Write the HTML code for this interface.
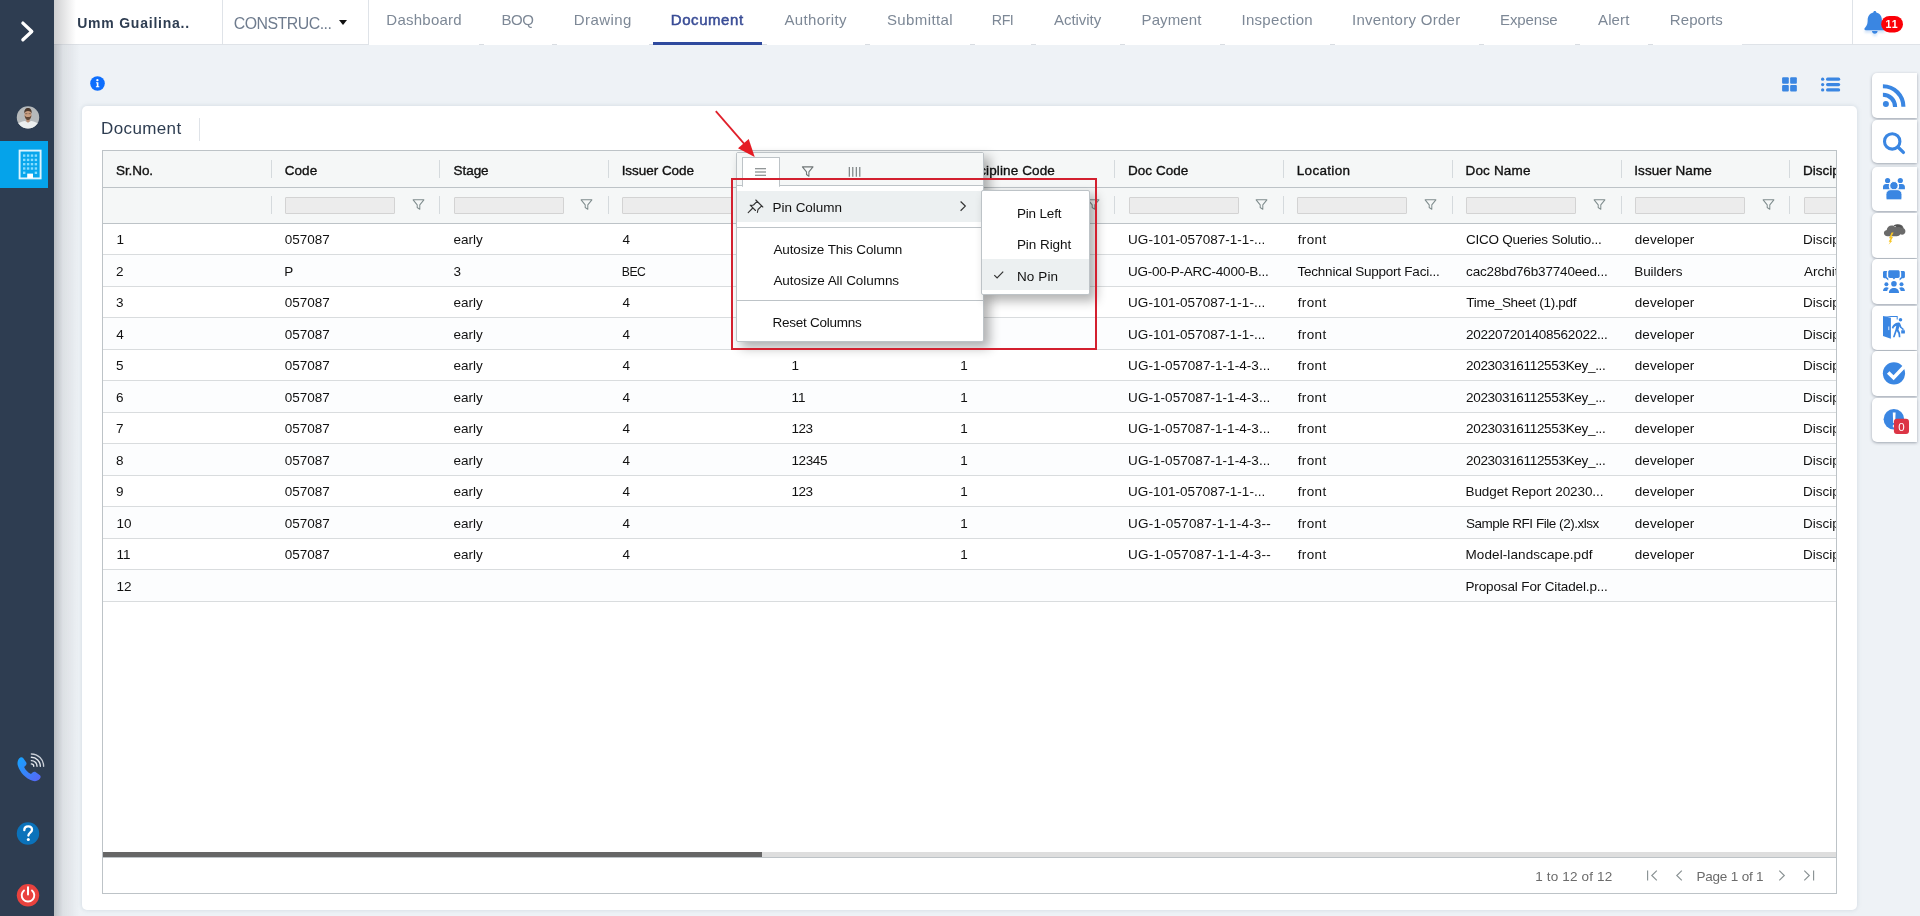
<!DOCTYPE html><html lang="en"><head><meta charset="utf-8"><title>Document</title><style>
*{box-sizing:border-box;margin:0;padding:0}
html,body{width:1920px;height:916px;overflow:hidden}
body{position:relative;background:#eef2f6;font-family:"Liberation Sans",Arial,sans-serif;color:#000}
.abs{position:absolute}
.t{position:absolute;white-space:nowrap;line-height:20px;margin-top:-10px;font-size:13.5px}
svg{position:absolute;overflow:visible}
/* sidebar */
.side{position:absolute;left:0;top:0;width:54px;height:916px;background:#2e3d51}
.sideshadow{position:absolute;left:54px;top:44px;width:26px;height:872px;background:linear-gradient(90deg,rgba(70,72,78,.30),rgba(70,72,78,.10) 35%,rgba(70,72,78,0))}
.active{position:absolute;left:0;top:141px;width:48px;height:46.5px;background:#05a3ea}
/* topbar */
.top{position:absolute;left:54px;top:0;width:1866px;height:45px;background:#fff;border-bottom:1px solid #dfe3e8}
.topshadow{position:absolute;left:54px;top:0;width:22px;height:44px;background:linear-gradient(90deg,rgba(70,72,78,.26),rgba(70,72,78,0))}
.vdiv{position:absolute;top:0;width:1px;height:45px;background:#dfe3e8}
.nav{font-size:15px;color:#7d8896}
.nav.on{color:#3a4d96;font-weight:normal;-webkit-text-stroke:.5px #3a4d96}
.proj{font-size:14.2px;font-weight:bold;color:#2e3d51}
.cons{font-size:17px;color:#6f7c8e}
/* card */
.card{position:absolute;left:82px;top:105.5px;width:1775px;height:804.5px;background:#fff;border-radius:5px;box-shadow:0 0 4px rgba(150,165,180,.35)}
.title{font-size:17px;color:#2e3d51}
/* grid */
.grid{position:absolute;left:102px;top:150px;width:1735px;height:743.5px;border:1px solid #bdc3c7;background:#fff;overflow:hidden}
.ghead{position:absolute;left:0;top:0;width:100%;height:36.5px;background:#f5f7f7;border-bottom:1px solid #bdc3c7}
.gfilter{position:absolute;left:0;top:36.5px;width:100%;height:36.5px;background:#f5f7f7;border-bottom:1px solid #bdc3c7}
.row{position:absolute;left:0;width:100%;height:31.5px;border-bottom:1px solid #d9dcde;background:#fff}
.row.odd{background:#fcfdfe}
.gclip{position:absolute;left:102.5px;top:150.5px;width:1733.5px;height:742px;overflow:hidden}
.hd{font-weight:normal;font-size:13.5px;color:#111;-webkit-text-stroke:.36px #111}
.cell{font-size:13.5px;color:#111}
.sep{position:absolute;width:1px;height:18px;background:#d5dadd}
.finp{position:absolute;top:46.5px;width:110px;height:17px;background:#ececec;border:1px solid #d3d3d3;border-radius:1px}
.fico{position:absolute;top:47.600px;width:13px;height:13px}
.hscroll{position:absolute;left:103px;top:852px;width:1733px;height:4.8px;background:#dedede}
.hthumb{position:absolute;left:103px;top:852px;width:659px;height:5px;background:#666}
.pager{position:absolute;left:103px;top:856.6px;width:1733px;height:.9px;background:#bdc3c7}
.pg{font-size:13.5px;color:#6b6b6b}
/* right panel */
.rb{position:absolute;left:1872px;width:45px;height:45px;background:#fff;border-radius:5px 0 0 5px;box-shadow:0 1px 3px rgba(80,90,105,.5)}
/* menu */
.menu{position:absolute;left:736px;top:152px;width:248px;height:189.500px;background:#fff;border:1px solid #bdc3c7;border-radius:2px;box-shadow:5.600px 5.600px 11px rgba(0,0,0,.3)}
.mtabs{position:absolute;left:0;top:0;width:100%;height:32.5px;background:#f5f7f7;border-bottom:1px solid #bdc3c7}
.mtab{position:absolute;left:5.400px;top:4px;width:38px;height:29.500px;background:#fff;border:1px solid #bdc3c7;border-bottom:0;border-radius:1px}
.mhl{position:absolute;left:0;width:100%;background:#ecf0f1}
.msep{position:absolute;left:0;width:100%;height:1px;background:#bdc3c7}
.sub{position:absolute;left:980.500px;top:190.300px;width:109px;height:104.700px;background:#fff;border:1px solid #bdc3c7;border-radius:2px;box-shadow:5.600px 5.600px 11px rgba(0,0,0,.3)}
.mi{font-size:13.5px;color:#111}
.redbox{position:absolute;left:731px;top:178px;width:366px;height:172px;border:2px solid #d3202f}
.bdg{font-size:10.6px;font-weight:bold;color:#fff}
.tick{position:absolute;top:43.700px;width:5px;height:1.300px;background:#d9dde2}
.navcover{position:absolute;left:369px;top:43px;width:1373px;height:2px;background:#fff}
.layer{position:absolute;left:0;top:0;width:1920px;height:916px;will-change:transform}

</style></head><body><div class="layer">
<div class="top"></div>
<div class="side"></div>
<div class="sideshadow"></div>
<div class="topshadow"></div>
<div class="active"></div>
<div class="vdiv" style="left:222px"></div>
<div class="vdiv" style="left:368px"></div>
<div class="vdiv" style="left:1852px"></div>
<svg style="left:339px;top:20px;width:8px;height:5px" viewBox="0 0 8 5"><path d="M0 0h8L4 5z" fill="#111"/></svg>
<div class="navcover"></div><i class="tick" style="left:479.0px"></i><i class="tick" style="left:551.5px"></i><i class="tick" style="left:649.0px"></i><i class="tick" style="left:761.5px"></i><i class="tick" style="left:865.0px"></i><i class="tick" style="left:970.0px"></i><i class="tick" style="left:1030.7px"></i><i class="tick" style="left:1119.5px"></i><i class="tick" style="left:1219.5px"></i><i class="tick" style="left:1330.0px"></i><i class="tick" style="left:1478.5px"></i><i class="tick" style="left:1575.0px"></i><i class="tick" style="left:1648.0px"></i>
<div class="abs" style="left:653px;top:42px;width:109px;height:3px;background:#2f4a9e"></div>
<div class="card"></div>
<div class="abs" style="left:199px;top:117.5px;width:1px;height:23px;background:#dfe3e8"></div>

<span class="t proj" style="left:77.20px;top:23.00px;font-size:14.0px;letter-spacing:0.775px;">Umm Guailina..</span>
<span class="t cons" style="left:233.73px;top:23.80px;font-size:15.88px;letter-spacing:-0.500px;">CONSTRUC...</span>
<span class="t nav" style="left:386.30px;top:20.00px;font-size:15.0px;letter-spacing:0.251px;">Dashboard</span>
<span class="t nav" style="left:501.55px;top:20.00px;font-size:15.0px;letter-spacing:-0.486px;">BOQ</span>
<span class="t nav" style="left:573.80px;top:20.00px;font-size:15.0px;letter-spacing:0.437px;">Drawing</span>
<span class="t nav on" style="left:670.80px;top:20.00px;font-size:15.0px;letter-spacing:0.558px;">Document</span>
<span class="t nav" style="left:784.50px;top:20.00px;font-size:15.0px;letter-spacing:0.351px;">Authority</span>
<span class="t nav" style="left:886.90px;top:20.00px;font-size:15.0px;letter-spacing:0.407px;">Submittal</span>
<span class="t nav" style="left:991.86px;top:20.00px;font-size:14.24px;letter-spacing:-0.500px;">RFI</span>
<span class="t nav" style="left:1054.00px;top:20.00px;font-size:15.0px;letter-spacing:-0.036px;">Activity</span>
<span class="t nav" style="left:1141.50px;top:20.00px;font-size:15.0px;letter-spacing:0.129px;">Payment</span>
<span class="t nav" style="left:1241.40px;top:20.00px;font-size:15.0px;letter-spacing:0.318px;">Inspection</span>
<span class="t nav" style="left:1352.00px;top:20.00px;font-size:15.0px;letter-spacing:0.285px;">Inventory Order</span>
<span class="t nav" style="left:1500.10px;top:20.00px;font-size:15.0px;letter-spacing:-0.139px;">Expense</span>
<span class="t nav" style="left:1598.00px;top:20.00px;font-size:15.0px;letter-spacing:0.131px;">Alert</span>
<span class="t nav" style="left:1669.80px;top:20.00px;font-size:15.0px;letter-spacing:0.080px;">Reports</span>
<span class="t title" style="left:101.10px;top:129.00px;font-size:17.0px;letter-spacing:0.363px;">Document</span>
<div class="grid">
<div class="ghead"></div><div class="gfilter"></div>
<div class="row" style="top:72.50px"></div>
<div class="row odd" style="top:104.00px"></div>
<div class="row" style="top:135.50px"></div>
<div class="row odd" style="top:167.00px"></div>
<div class="row" style="top:198.50px"></div>
<div class="row odd" style="top:230.00px"></div>
<div class="row" style="top:261.50px"></div>
<div class="row odd" style="top:293.00px"></div>
<div class="row" style="top:324.50px"></div>
<div class="row odd" style="top:356.00px"></div>
<div class="row" style="top:387.50px"></div>
<div class="row odd" style="top:419.00px"></div>
</div>
<div class="gclip">
<span class="t hd" style="left:13.50px;top:20.40px;font-size:13.5px;letter-spacing:-0.093px;">Sr.No.</span>
<span class="t hd" style="left:182.25px;top:20.40px;font-size:13.5px;letter-spacing:0.045px;">Code</span>
<i class="sep" style="left:168.00px;top:9.5px"></i><i class="sep" style="left:168.00px;top:45.5px"></i>
<i class="finp" style="left:182.45px"></i>
<svg class="fico" style="left:309.05px" viewBox="0 0 14 14"><path d="M1.2 2h11.6L8.4 7.4v4.8L5.6 10.2V7.4z" fill="none" stroke="#7f8c8d" stroke-width="1.1" stroke-linejoin="round"/></svg>
<span class="t hd" style="left:351.00px;top:20.40px;font-size:13.5px;letter-spacing:-0.043px;">Stage</span>
<i class="sep" style="left:336.75px;top:9.5px"></i><i class="sep" style="left:336.75px;top:45.5px"></i>
<i class="finp" style="left:351.20px"></i>
<svg class="fico" style="left:477.80px" viewBox="0 0 14 14"><path d="M1.2 2h11.6L8.4 7.4v4.8L5.6 10.2V7.4z" fill="none" stroke="#7f8c8d" stroke-width="1.1" stroke-linejoin="round"/></svg>
<span class="t hd" style="left:519.15px;top:20.40px;font-size:13.5px;letter-spacing:-0.038px;">Issuer Code</span>
<i class="sep" style="left:505.50px;top:9.5px"></i><i class="sep" style="left:505.50px;top:45.5px"></i>
<i class="finp" style="left:519.95px"></i>
<svg class="fico" style="left:646.55px" viewBox="0 0 14 14"><path d="M1.2 2h11.6L8.4 7.4v4.8L5.6 10.2V7.4z" fill="none" stroke="#7f8c8d" stroke-width="1.1" stroke-linejoin="round"/></svg>
<i class="sep" style="left:674.25px;top:9.5px"></i><i class="sep" style="left:674.25px;top:45.5px"></i>
<i class="finp" style="left:688.70px"></i>
<svg class="fico" style="left:815.30px" viewBox="0 0 14 14"><path d="M1.2 2h11.6L8.4 7.4v4.8L5.6 10.2V7.4z" fill="none" stroke="#7f8c8d" stroke-width="1.1" stroke-linejoin="round"/></svg>
<span class="t hd" style="left:856.75px;top:20.40px;font-size:13.5px;letter-spacing:0.130px;">Discipline Code</span>
<i class="sep" style="left:843.00px;top:9.5px"></i><i class="sep" style="left:843.00px;top:45.5px"></i>
<i class="finp" style="left:857.45px"></i>
<svg class="fico" style="left:984.05px" viewBox="0 0 14 14"><path d="M1.2 2h11.6L8.4 7.4v4.8L5.6 10.2V7.4z" fill="none" stroke="#7f8c8d" stroke-width="1.1" stroke-linejoin="round"/></svg>
<span class="t hd" style="left:1025.50px;top:20.40px;font-size:13.5px;letter-spacing:0.040px;">Doc Code</span>
<i class="sep" style="left:1011.75px;top:9.5px"></i><i class="sep" style="left:1011.75px;top:45.5px"></i>
<i class="finp" style="left:1026.20px"></i>
<svg class="fico" style="left:1152.80px" viewBox="0 0 14 14"><path d="M1.2 2h11.6L8.4 7.4v4.8L5.6 10.2V7.4z" fill="none" stroke="#7f8c8d" stroke-width="1.1" stroke-linejoin="round"/></svg>
<span class="t hd" style="left:1194.25px;top:20.40px;font-size:13.5px;letter-spacing:0.310px;">Location</span>
<i class="sep" style="left:1180.50px;top:9.5px"></i><i class="sep" style="left:1180.50px;top:45.5px"></i>
<i class="finp" style="left:1194.95px"></i>
<svg class="fico" style="left:1321.55px" viewBox="0 0 14 14"><path d="M1.2 2h11.6L8.4 7.4v4.8L5.6 10.2V7.4z" fill="none" stroke="#7f8c8d" stroke-width="1.1" stroke-linejoin="round"/></svg>
<span class="t hd" style="left:1363.00px;top:20.40px;font-size:13.5px;letter-spacing:0.163px;">Doc Name</span>
<i class="sep" style="left:1349.25px;top:9.5px"></i><i class="sep" style="left:1349.25px;top:45.5px"></i>
<i class="finp" style="left:1363.70px"></i>
<svg class="fico" style="left:1490.30px" viewBox="0 0 14 14"><path d="M1.2 2h11.6L8.4 7.4v4.8L5.6 10.2V7.4z" fill="none" stroke="#7f8c8d" stroke-width="1.1" stroke-linejoin="round"/></svg>
<span class="t hd" style="left:1531.65px;top:20.40px;font-size:13.5px;letter-spacing:0.118px;">Issuer Name</span>
<i class="sep" style="left:1518.00px;top:9.5px"></i><i class="sep" style="left:1518.00px;top:45.5px"></i>
<i class="finp" style="left:1532.45px"></i>
<svg class="fico" style="left:1659.05px" viewBox="0 0 14 14"><path d="M1.2 2h11.6L8.4 7.4v4.8L5.6 10.2V7.4z" fill="none" stroke="#7f8c8d" stroke-width="1.1" stroke-linejoin="round"/></svg>
<span class="t hd" style="left:1700.50px;top:20.40px;font-size:13.5px;">Discipline</span>
<i class="sep" style="left:1686.75px;top:9.5px"></i><i class="sep" style="left:1686.75px;top:45.5px"></i>
<i class="finp" style="left:1701.20px"></i>
<svg class="fico" style="left:1827.80px" viewBox="0 0 14 14"><path d="M1.2 2h11.6L8.4 7.4v4.8L5.6 10.2V7.4z" fill="none" stroke="#7f8c8d" stroke-width="1.1" stroke-linejoin="round"/></svg>
<span class="t cell" style="left:13.90px;top:89.70px;font-size:13.5px;">1</span>
<span class="t cell" style="left:182.35px;top:89.70px;font-size:13.5px;letter-spacing:-0.048px;">057087</span>
<span class="t cell" style="left:351.10px;top:89.70px;font-size:13.5px;letter-spacing:-0.053px;">early</span>
<span class="t cell" style="left:520.05px;top:89.70px;font-size:13.5px;">4</span>
<span class="t cell" style="left:1025.60px;top:89.70px;font-size:13.5px;letter-spacing:0.029px;">UG-101-057087-1-1-...</span>
<span class="t cell" style="left:1195.25px;top:89.70px;font-size:13.5px;letter-spacing:0.359px;">front</span>
<span class="t cell" style="left:1363.50px;top:89.70px;font-size:13.5px;letter-spacing:-0.241px;">CICO Queries Solutio...</span>
<span class="t cell" style="left:1532.35px;top:89.70px;font-size:13.5px;letter-spacing:0.013px;">developer</span>
<span class="t cell" style="left:1700.50px;top:89.70px;font-size:13.5px;">Discipline</span>
<span class="t cell" style="left:13.50px;top:121.20px;font-size:13.5px;">2</span>
<span class="t cell" style="left:181.75px;top:121.20px;font-size:13.5px;">P</span>
<span class="t cell" style="left:351.10px;top:121.20px;font-size:13.5px;">3</span>
<span class="t cell" style="left:519.36px;top:121.20px;font-size:12.16px;letter-spacing:-0.500px;">BEC</span>
<span class="t cell" style="left:1025.60px;top:121.20px;font-size:13.5px;letter-spacing:-0.249px;">UG-00-P-ARC-4000-B...</span>
<span class="t cell" style="left:1195.05px;top:121.20px;font-size:13.5px;letter-spacing:-0.236px;">Technical Support Faci...</span>
<span class="t cell" style="left:1363.60px;top:121.20px;font-size:13.5px;letter-spacing:-0.162px;">cac28bd76b37740eed...</span>
<span class="t cell" style="left:1531.75px;top:121.20px;font-size:13.5px;letter-spacing:-0.075px;">Builders</span>
<span class="t cell" style="left:1701.60px;top:121.20px;font-size:13.5px;">Architectural</span>
<span class="t cell" style="left:13.60px;top:152.70px;font-size:13.5px;">3</span>
<span class="t cell" style="left:182.35px;top:152.70px;font-size:13.5px;letter-spacing:-0.048px;">057087</span>
<span class="t cell" style="left:351.10px;top:152.70px;font-size:13.5px;letter-spacing:-0.053px;">early</span>
<span class="t cell" style="left:520.05px;top:152.70px;font-size:13.5px;">4</span>
<span class="t cell" style="left:1025.60px;top:152.70px;font-size:13.5px;letter-spacing:0.029px;">UG-101-057087-1-1-...</span>
<span class="t cell" style="left:1195.25px;top:152.70px;font-size:13.5px;letter-spacing:0.359px;">front</span>
<span class="t cell" style="left:1363.80px;top:152.70px;font-size:13.5px;letter-spacing:-0.282px;">Time_Sheet (1).pdf</span>
<span class="t cell" style="left:1532.35px;top:152.70px;font-size:13.5px;letter-spacing:0.013px;">developer</span>
<span class="t cell" style="left:1700.50px;top:152.70px;font-size:13.5px;">Discipline</span>
<span class="t cell" style="left:13.80px;top:184.20px;font-size:13.5px;">4</span>
<span class="t cell" style="left:182.35px;top:184.20px;font-size:13.5px;letter-spacing:-0.048px;">057087</span>
<span class="t cell" style="left:351.10px;top:184.20px;font-size:13.5px;letter-spacing:-0.053px;">early</span>
<span class="t cell" style="left:520.05px;top:184.20px;font-size:13.5px;">4</span>
<span class="t cell" style="left:1025.60px;top:184.20px;font-size:13.5px;letter-spacing:0.029px;">UG-101-057087-1-1-...</span>
<span class="t cell" style="left:1195.25px;top:184.20px;font-size:13.5px;letter-spacing:0.359px;">front</span>
<span class="t cell" style="left:1363.50px;top:184.20px;font-size:13.5px;letter-spacing:-0.232px;">202207201408562022...</span>
<span class="t cell" style="left:1532.35px;top:184.20px;font-size:13.5px;letter-spacing:0.013px;">developer</span>
<span class="t cell" style="left:1700.50px;top:184.20px;font-size:13.5px;">Discipline</span>
<span class="t cell" style="left:13.60px;top:215.70px;font-size:13.5px;">5</span>
<span class="t cell" style="left:182.35px;top:215.70px;font-size:13.5px;letter-spacing:-0.048px;">057087</span>
<span class="t cell" style="left:351.10px;top:215.70px;font-size:13.5px;letter-spacing:-0.053px;">early</span>
<span class="t cell" style="left:520.05px;top:215.70px;font-size:13.5px;">4</span>
<span class="t cell" style="left:688.90px;top:215.70px;font-size:13.5px;">1</span>
<span class="t cell" style="left:857.65px;top:215.70px;font-size:13.5px;">1</span>
<span class="t cell" style="left:1025.60px;top:215.70px;font-size:13.5px;letter-spacing:0.052px;">UG-1-057087-1-1-4-3...</span>
<span class="t cell" style="left:1195.25px;top:215.70px;font-size:13.5px;letter-spacing:0.359px;">front</span>
<span class="t cell" style="left:1363.50px;top:215.70px;font-size:13.5px;letter-spacing:-0.319px;">20230316112553Key_...</span>
<span class="t cell" style="left:1532.35px;top:215.70px;font-size:13.5px;letter-spacing:0.013px;">developer</span>
<span class="t cell" style="left:1700.50px;top:215.70px;font-size:13.5px;">Discipline</span>
<span class="t cell" style="left:13.50px;top:247.20px;font-size:13.5px;">6</span>
<span class="t cell" style="left:182.35px;top:247.20px;font-size:13.5px;letter-spacing:-0.048px;">057087</span>
<span class="t cell" style="left:351.10px;top:247.20px;font-size:13.5px;letter-spacing:-0.053px;">early</span>
<span class="t cell" style="left:520.05px;top:247.20px;font-size:13.5px;">4</span>
<span class="t cell" style="left:688.90px;top:247.20px;font-size:13.5px;letter-spacing:0.094px;">11</span>
<span class="t cell" style="left:857.65px;top:247.20px;font-size:13.5px;">1</span>
<span class="t cell" style="left:1025.60px;top:247.20px;font-size:13.5px;letter-spacing:0.052px;">UG-1-057087-1-1-4-3...</span>
<span class="t cell" style="left:1195.25px;top:247.20px;font-size:13.5px;letter-spacing:0.359px;">front</span>
<span class="t cell" style="left:1363.50px;top:247.20px;font-size:13.5px;letter-spacing:-0.319px;">20230316112553Key_...</span>
<span class="t cell" style="left:1532.35px;top:247.20px;font-size:13.5px;letter-spacing:0.013px;">developer</span>
<span class="t cell" style="left:1700.50px;top:247.20px;font-size:13.5px;">Discipline</span>
<span class="t cell" style="left:13.50px;top:278.70px;font-size:13.5px;">7</span>
<span class="t cell" style="left:182.35px;top:278.70px;font-size:13.5px;letter-spacing:-0.048px;">057087</span>
<span class="t cell" style="left:351.10px;top:278.70px;font-size:13.5px;letter-spacing:-0.053px;">early</span>
<span class="t cell" style="left:520.05px;top:278.70px;font-size:13.5px;">4</span>
<span class="t cell" style="left:688.90px;top:278.70px;font-size:13.5px;letter-spacing:-0.408px;">123</span>
<span class="t cell" style="left:857.65px;top:278.70px;font-size:13.5px;">1</span>
<span class="t cell" style="left:1025.60px;top:278.70px;font-size:13.5px;letter-spacing:0.052px;">UG-1-057087-1-1-4-3...</span>
<span class="t cell" style="left:1195.25px;top:278.70px;font-size:13.5px;letter-spacing:0.359px;">front</span>
<span class="t cell" style="left:1363.50px;top:278.70px;font-size:13.5px;letter-spacing:-0.319px;">20230316112553Key_...</span>
<span class="t cell" style="left:1532.35px;top:278.70px;font-size:13.5px;letter-spacing:0.013px;">developer</span>
<span class="t cell" style="left:1700.50px;top:278.70px;font-size:13.5px;">Discipline</span>
<span class="t cell" style="left:13.60px;top:310.20px;font-size:13.5px;">8</span>
<span class="t cell" style="left:182.35px;top:310.20px;font-size:13.5px;letter-spacing:-0.048px;">057087</span>
<span class="t cell" style="left:351.10px;top:310.20px;font-size:13.5px;letter-spacing:-0.053px;">early</span>
<span class="t cell" style="left:520.05px;top:310.20px;font-size:13.5px;">4</span>
<span class="t cell" style="left:688.90px;top:310.20px;font-size:13.5px;letter-spacing:-0.383px;">12345</span>
<span class="t cell" style="left:857.65px;top:310.20px;font-size:13.5px;">1</span>
<span class="t cell" style="left:1025.60px;top:310.20px;font-size:13.5px;letter-spacing:0.052px;">UG-1-057087-1-1-4-3...</span>
<span class="t cell" style="left:1195.25px;top:310.20px;font-size:13.5px;letter-spacing:0.359px;">front</span>
<span class="t cell" style="left:1363.50px;top:310.20px;font-size:13.5px;letter-spacing:-0.319px;">20230316112553Key_...</span>
<span class="t cell" style="left:1532.35px;top:310.20px;font-size:13.5px;letter-spacing:0.013px;">developer</span>
<span class="t cell" style="left:1700.50px;top:310.20px;font-size:13.5px;">Discipline</span>
<span class="t cell" style="left:13.50px;top:341.70px;font-size:13.5px;">9</span>
<span class="t cell" style="left:182.35px;top:341.70px;font-size:13.5px;letter-spacing:-0.048px;">057087</span>
<span class="t cell" style="left:351.10px;top:341.70px;font-size:13.5px;letter-spacing:-0.053px;">early</span>
<span class="t cell" style="left:520.05px;top:341.70px;font-size:13.5px;">4</span>
<span class="t cell" style="left:688.90px;top:341.70px;font-size:13.5px;letter-spacing:-0.408px;">123</span>
<span class="t cell" style="left:857.65px;top:341.70px;font-size:13.5px;">1</span>
<span class="t cell" style="left:1025.60px;top:341.70px;font-size:13.5px;letter-spacing:0.029px;">UG-101-057087-1-1-...</span>
<span class="t cell" style="left:1195.25px;top:341.70px;font-size:13.5px;letter-spacing:0.359px;">front</span>
<span class="t cell" style="left:1363.00px;top:341.70px;font-size:13.5px;letter-spacing:-0.079px;">Budget Report 20230...</span>
<span class="t cell" style="left:1532.35px;top:341.70px;font-size:13.5px;letter-spacing:0.013px;">developer</span>
<span class="t cell" style="left:1700.50px;top:341.70px;font-size:13.5px;">Discipline</span>
<span class="t cell" style="left:13.90px;top:373.20px;font-size:13.5px;letter-spacing:-0.008px;">10</span>
<span class="t cell" style="left:182.35px;top:373.20px;font-size:13.5px;letter-spacing:-0.048px;">057087</span>
<span class="t cell" style="left:351.10px;top:373.20px;font-size:13.5px;letter-spacing:-0.053px;">early</span>
<span class="t cell" style="left:520.05px;top:373.20px;font-size:13.5px;">4</span>
<span class="t cell" style="left:857.65px;top:373.20px;font-size:13.5px;">1</span>
<span class="t cell" style="left:1025.60px;top:373.20px;font-size:13.5px;letter-spacing:0.190px;">UG-1-057087-1-1-4-3--</span>
<span class="t cell" style="left:1195.25px;top:373.20px;font-size:13.5px;letter-spacing:0.359px;">front</span>
<span class="t cell" style="left:1363.50px;top:373.20px;font-size:13.5px;letter-spacing:-0.464px;">Sample RFI File (2).xlsx</span>
<span class="t cell" style="left:1532.35px;top:373.20px;font-size:13.5px;letter-spacing:0.013px;">developer</span>
<span class="t cell" style="left:1700.50px;top:373.20px;font-size:13.5px;">Discipline</span>
<span class="t cell" style="left:13.90px;top:404.70px;font-size:13.5px;letter-spacing:0.094px;">11</span>
<span class="t cell" style="left:182.35px;top:404.70px;font-size:13.5px;letter-spacing:-0.048px;">057087</span>
<span class="t cell" style="left:351.10px;top:404.70px;font-size:13.5px;letter-spacing:-0.053px;">early</span>
<span class="t cell" style="left:520.05px;top:404.70px;font-size:13.5px;">4</span>
<span class="t cell" style="left:857.65px;top:404.70px;font-size:13.5px;">1</span>
<span class="t cell" style="left:1025.60px;top:404.70px;font-size:13.5px;letter-spacing:0.190px;">UG-1-057087-1-1-4-3--</span>
<span class="t cell" style="left:1195.25px;top:404.70px;font-size:13.5px;letter-spacing:0.359px;">front</span>
<span class="t cell" style="left:1363.00px;top:404.70px;font-size:13.5px;letter-spacing:0.096px;">Model-landscape.pdf</span>
<span class="t cell" style="left:1532.35px;top:404.70px;font-size:13.5px;letter-spacing:0.013px;">developer</span>
<span class="t cell" style="left:1700.50px;top:404.70px;font-size:13.5px;">Discipline</span>
<span class="t cell" style="left:13.90px;top:436.20px;font-size:13.5px;letter-spacing:0.092px;">12</span>
<span class="t cell" style="left:1363.00px;top:436.20px;font-size:13.5px;letter-spacing:-0.138px;">Proposal For Citadel.p...</span>
</div>
<div class="hscroll"></div><div class="hthumb"></div><div class="pager"></div>
<svg style="left:1640px;top:866px;width:180px;height:20px" viewBox="1640 866 180 20" fill="none" stroke="#8a9294" stroke-width="1.150">
 <path d="M1647.600 870.500v10M1656.800 870.700l-5 4.800 5 4.800"/>
 <path d="M1681.800 870.700l-5 4.800 5 4.800"/>
 <path d="M1779.300 870.700l5 4.800-5 4.800"/>
 <path d="M1804.300 870.700l5 4.800-5 4.800M1813.600 870.500v10"/>
</svg>
<div class="menu">
 <div class="mtabs"></div><div class="mtab"></div>
 <div class="mhl" style="top:38px;height:31px"></div>
 <div class="msep" style="top:74.300px"></div>
 <div class="msep" style="top:147.300px"></div>
</div>
<svg style="left:737px;top:152px;width:250px;height:190px" viewBox="737 152 250 190" fill="none" stroke="#6f7677" stroke-width="1.100">
 <path d="M755 168.700h11M755 172h11M755 175.300h11"/>
 <path d="M802.400 166.900h10.600l-4.100 5v4.300l-2.400-1.700v-2.600z" stroke-linejoin="round"/>
 <path d="M849.300 167v9.700M852.800 167v9.700M856.300 167v9.700M859.800 167v9.700"/>
 <path d="M748.200 212.600l4.600-4.600M750.200 205.200l5.300 5.300M750.600 205.600l2.900-.6 3.600-3.700 4.600 4.600-3.700 3.600-.6 2.900M755.800 200l7 7" stroke="#333" stroke-linejoin="round" stroke-linecap="round"/>
 <path d="M960.600 201.500l4.700 4.600-4.700 4.600" stroke="#333" stroke-width="1.200"/>
</svg>
<div class="sub"><div class="mhl" style="top:68px;height:31px"></div></div>
<svg style="left:990px;top:268px;width:16px;height:14px" viewBox="990 268 16 14" fill="none" stroke="#333" stroke-width="1.200"><path d="M994.300 275.200l2.800 2.800 6.100-6.300"/></svg>

<span class="t pg" style="left:1535.30px;top:876.50px;font-size:13.5px;letter-spacing:0.154px;">1 to 12 of 12</span>
<span class="t pg" style="left:1696.40px;top:876.50px;font-size:13.5px;letter-spacing:-0.185px;">Page 1 of 1</span>
<span class="t mi" style="left:772.50px;top:207.60px;font-size:13.5px;letter-spacing:-0.030px;">Pin Column</span>
<span class="t mi" style="left:773.40px;top:249.80px;font-size:13.5px;letter-spacing:-0.115px;">Autosize This Column</span>
<span class="t mi" style="left:773.40px;top:280.60px;font-size:13.5px;letter-spacing:-0.058px;">Autosize All Columns</span>
<span class="t mi" style="left:772.50px;top:322.50px;font-size:13.5px;letter-spacing:-0.261px;">Reset Columns</span>
<span class="t mi" style="left:1016.90px;top:213.70px;font-size:13.5px;letter-spacing:-0.161px;">Pin Left</span>
<span class="t mi" style="left:1016.90px;top:244.60px;font-size:13.5px;letter-spacing:-0.053px;">Pin Right</span>
<span class="t mi" style="left:1016.90px;top:276.90px;font-size:13.5px;letter-spacing:0.138px;">No Pin</span>
<div class="redbox"></div>
<svg style="left:705px;top:105px;width:60px;height:60px" viewBox="705 105 60 60"><path d="M715.800 111.200l30.400 35" stroke="#e0202b" stroke-width="1.800" fill="none"/><path d="M754.700 157l-16.700-8.700 10.700-9.300z" fill="#e51c24"/></svg>

<!-- sidebar icons -->
<svg style="left:0;top:0;width:54px;height:916px" viewBox="0 0 54 916">
 <path d="M22.9 23.1l8.9 8.35-8.9 8.35" fill="none" stroke="#fff" stroke-width="3.3" stroke-linecap="round" stroke-linejoin="round"/>
 <!-- avatar -->
 <defs><clipPath id="av"><circle cx="28" cy="117.4" r="11.2"/></clipPath>
 <linearGradient id="ph" x1="0" y1="0" x2="1" y2="1"><stop offset="0" stop-color="#14a5ff"/><stop offset="1" stop-color="#5a63f5"/></linearGradient></defs>
 <g clip-path="url(#av)">
  <rect x="16" y="105" width="24" height="25" fill="#b5b9bb"/>
  <path d="M16 130v-4.200c1.800-3.300 5.800-4.300 8.600-4.900l3.400 1.200 3.400-1.200c2.800.6 6.800 1.600 8.600 4.900v4.200z" fill="#eceeee"/>
  <path d="M26.300 118.500h3.400v3l-1.700 1.200-1.700-1.200z" fill="#b98d72"/>
  <ellipse cx="28" cy="114.600" rx="3.500" ry="4.500" fill="#c79d80"/>
  <path d="M24.400 113.600c-.5-3.600 1.200-5.500 3.600-5.500s4.100 1.900 3.600 5.500c-.5-1.900-1.300-2.700-3.600-2.700s-3.100.8-3.600 2.700z" fill="#4a382c"/>
  <path d="M24.600 115.300c.2 3 1.600 4.700 3.400 4.700s3.200-1.700 3.400-4.700c-.7 1.400-1.800 1.800-3.400 1.800s-2.700-.4-3.400-1.800z" fill="#5f4636"/>
  <path d="M25.200 113.700h2.200M28.600 113.700h2.200" stroke="#3a2c24" stroke-width=".5"/>
 </g>
 <!-- building -->
 <rect x="19.600" y="150.600" width="21" height="27.800" fill="#08a6ec" stroke="#dcf5ff" stroke-width="1.900"/>
 <g fill="#86dcff">
  <rect x="23" y="154.400" width="2.400" height="2.400"/><rect x="26.900" y="154.400" width="2.400" height="2.400"/><rect x="30.800" y="154.400" width="2.400" height="2.400"/><rect x="34.700" y="154.400" width="2.400" height="2.400"/>
  <rect x="23" y="158.700" width="2.400" height="2.400"/><rect x="26.900" y="158.700" width="2.400" height="2.400"/><rect x="30.800" y="158.700" width="2.400" height="2.400"/><rect x="34.700" y="158.700" width="2.400" height="2.400"/>
  <rect x="23" y="163" width="2.400" height="2.400"/><rect x="26.900" y="163" width="2.400" height="2.400"/><rect x="30.800" y="163" width="2.400" height="2.400"/><rect x="34.700" y="163" width="2.400" height="2.400"/>
  <rect x="23" y="167.300" width="2.400" height="2.400"/><rect x="26.900" y="167.300" width="2.400" height="2.400"/><rect x="30.800" y="167.300" width="2.400" height="2.400"/><rect x="34.700" y="167.300" width="2.400" height="2.400"/>
  <rect x="23" y="171.600" width="2.400" height="2.400"/><rect x="34.700" y="171.600" width="2.400" height="2.400"/>
 </g>
 <rect x="27.200" y="173.600" width="5.800" height="4.400" fill="#fff"/>
 <!-- phone -->
 <g transform="translate(16.9 757.2) scale(.915) translate(-16.8 -757.3)">
 <path d="M19.200 758.600c1.300-1.400 3.300-1.700 4.400-.5l3.300 4.700c.8 1.200.5 2.600-.5 3.600l-1.700 1.500c1.500 3.300 4 5.900 7.500 7.700l1.700-1.600c1-.9 2.500-1.100 3.600-.3l4.500 3.300c1.200 1 .9 2.900-.4 4.100-2 2.100-4.700 3-7.600 2-7.700-2.600-13.700-8.900-16.200-16.800-.8-2.800-.2-5.600 1.400-7.700z" fill="url(#ph)"/>
 <g fill="none" stroke="#e4e8ee" stroke-width="1.500" stroke-linecap="round">
  <path d="M32.600 764.600a2.600 2.600 0 0 1 2.600 2.600"/><path d="M32.600 761a6.200 6.200 0 0 1 6.200 6.200"/><path d="M32.600 757.400a9.800 9.800 0 0 1 9.800 9.800"/><path d="M32.600 753.800a13.400 13.400 0 0 1 13.400 13.400" stroke="#c9ced6"/>
 </g>
 </g>
 <!-- help -->
 <circle cx="28" cy="833.500" r="11.200" fill="#0b72ba"/>
 <path d="M24.300 830.200c0-2.400 1.700-3.900 3.900-3.900s3.800 1.400 3.800 3.400c0 2.900-3.600 3-3.600 5.900" fill="none" stroke="#fff" stroke-width="2.300" stroke-linecap="round"/>
 <circle cx="28.300" cy="839.600" r="1.500" fill="#fff"/>
 <!-- power -->
 <circle cx="28" cy="895.300" r="11.200" fill="#e9423e"/>
 <path d="M24 890.400a6.300 6.300 0 1 0 8 0" fill="none" stroke="#fff" stroke-width="1.900" stroke-linecap="round"/>
 <path d="M28 887.300v7.200" stroke="#fff" stroke-width="2" stroke-linecap="round"/>
</svg>
<!-- info -->
<svg style="left:89.800px;top:76px;width:15px;height:15px" viewBox="0 0 15 15"><circle cx="7.500" cy="7.500" r="7.300" fill="#0d6efd"/><circle cx="7.400" cy="4.200" r="1.150" fill="#fff"/><path d="M6.100 6.200h2.300v4h.9v1.100H5.900v-1.100h.9V7.300h-.7z" fill="#fff"/></svg>
<!-- bell -->
<svg style="left:1862px;top:9px;width:44px;height:28px" viewBox="1862 9 44 28">
 <defs><filter id="bs" x="-30%" y="-30%" width="160%" height="170%"><feGaussianBlur stdDeviation="1.100"/></filter></defs>
 <path d="M1874.800 12c1 0 1.500.7 1.500 1.500 3.700.9 5.600 4 5.600 7.700 0 4.500 1.500 6.300 2.900 7.700.9 1 .2 2.300-1 2.300h-18c-1.200 0-1.900-1.300-1-2.300 1.400-1.400 2.900-3.200 2.900-7.700 0-3.700 1.900-6.800 5.600-7.700 0-.8.500-1.500 1.500-1.500zM1872 32h5.600c0 1.600-1.200 2.700-2.800 2.700s-2.800-1.100-2.800-2.700z" fill="#3a86e2" opacity=".22" filter="url(#bs)" transform="translate(0 1.500)"/>
 <path d="M1874.800 11c1 0 1.500.7 1.500 1.500 3.700.9 5.600 4 5.600 7.700 0 4.500 1.500 6.300 2.900 7.700.9 1 .2 2.300-1 2.300h-18c-1.200 0-1.900-1.300-1-2.300 1.400-1.400 2.900-3.200 2.900-7.700 0-3.700 1.900-6.800 5.600-7.700 0-.8.500-1.500 1.500-1.500zM1872 31h5.600c0 1.600-1.200 2.700-2.800 2.700s-2.800-1.100-2.800-2.700z" fill="#3a86e2"/>
 <rect x="1881.200" y="15.900" width="21.800" height="16.600" rx="8.300" fill="#fb0007"/>
</svg>

<!-- grid / list icons -->
<svg style="left:1780px;top:75px;width:64px;height:20px" viewBox="1780 75 64 20" fill="#3a86e2">
 <rect x="1782.100" y="77.300" width="6.700" height="6.500" rx="1"/><rect x="1790.150" y="77.300" width="6.700" height="6.500" rx="1"/>
 <rect x="1782.100" y="85.100" width="6.700" height="6.500" rx="1"/><rect x="1790.150" y="85.100" width="6.700" height="6.500" rx="1"/>
 <circle cx="1822.650" cy="79.200" r="1.650"/><circle cx="1822.650" cy="84.550" r="1.650"/><circle cx="1822.650" cy="89.900" r="1.650"/>
 <rect x="1826" y="77.550" width="14.200" height="3.300" rx="1.650"/><rect x="1826" y="82.900" width="14.200" height="3.300" rx="1.650"/><rect x="1826" y="88.250" width="14.200" height="3.300" rx="1.650"/>
</svg>

<div class="rb" style="top:72.700px;height:45px"></div>
<div class="rb" style="top:120.200px;height:42.600px"></div>
<div class="rb" style="top:166.800px;height:44.500px"></div>
<div class="rb" style="top:213.300px;height:44.400px"></div>
<div class="rb" style="top:259.100px;height:44.700px"></div>
<div class="rb" style="top:305.500px;height:44.400px"></div>
<div class="rb" style="top:351.100px;height:44.700px"></div>
<div class="rb" style="top:397.500px;height:44.400px"></div>
<svg style="left:1872px;top:70px;width:48px;height:376px" viewBox="1872 70 48 376">
 <g fill="#3a86e2">
  <!-- rss -->
  <circle cx="1885.900" cy="103.900" r="3"/>
  <path d="M1882.900 94.700a12.200 12.200 0 0 1 12.200 12.200M1882.900 86.300a20.500 20.500 0 0 1 20.500 20.500" fill="none" stroke="#3a86e2" stroke-width="4.100"/>
  <!-- search -->
  <circle cx="1892.200" cy="141.400" r="7.700" fill="none" stroke="#3a86e2" stroke-width="3.100"/>
  <path d="M1897.900 147l5.500 5.400" stroke="#3a86e2" stroke-width="3.300" stroke-linecap="round"/>
  <!-- users -->
  <circle cx="1887.600" cy="180.500" r="2.600"/><circle cx="1900.300" cy="180.500" r="2.600"/>
  <path d="M1883 189.200v-2.400c0-1.700 1.300-2.900 3-2.900h1.800c.5 0 1 .1 1.400.4-.3.800-.4 1.400-.4 2.100 0 1.100.4 2.100 1 2.800zM1904.900 189.200v-2.400c0-1.700-1.300-2.900-3-2.900h-1.800c-.5 0-1 .1-1.400.4.300.8.400 1.400.4 2.100 0 1.100-.4 2.100-1 2.800z"/>
  <circle cx="1893.950" cy="185.700" r="4.200" stroke="#fff" stroke-width="1"/>
  <path stroke="#fff" stroke-width=".8" d="M1886 198v-3.600c0-2.700 2.100-4.700 4.700-4.700h6.500c2.600 0 4.700 2 4.700 4.700v3.600c0 1-.8 1.800-1.800 1.800h-12.300c-1 0-1.800-.8-1.800-1.800z"/>
  <!-- meeting -->
  <path d="M1889.900 270.200h8.100c1 0 1.700.7 1.700 1.700v4.300c0 1-.7 1.700-1.700 1.700h-2.700l-1.350 1.500-1.350-1.500h-2.700c-1 0-1.700-.7-1.700-1.700v-4.300c0-1 .7-1.700 1.700-1.700z"/>
  <path d="M1883 272.300c0-.8.600-1.400 1.400-1.400h2.800c-.4.700-.5 1.400-.5 2.200v3.900l1.600 1.400v2l-2.500-2.200h-1.400c-.8 0-1.400-.6-1.400-1.400zM1904.900 272.300c0-.8-.600-1.400-1.400-1.400h-2.800c.4.700.5 1.400.5 2.200v3.900l-1.600 1.400v2l2.500-2.200h1.400c.8 0 1.400-.6 1.400-1.400z"/>
  <circle cx="1893.950" cy="283.800" r="2.800"/>
  <path d="M1888.900 292.900c0-2.900 2.200-4.800 5.050-4.800s5.050 1.900 5.050 4.800z"/>
  <circle cx="1886.400" cy="284.200" r="2"/><circle cx="1901.500" cy="284.200" r="2"/>
  <path d="M1883 291c0-2.200 1.500-3.700 3.500-3.700.9 0 1.700.3 2.300.8-1 1-1.400 1.900-1.600 2.900zM1904.900 291c0-2.200-1.500-3.700-3.500-3.700-.9 0-1.700.3-2.300.8 1 1 1.400 1.900 1.600 2.900z"/>
  <!-- door -->
  <path d="M1883 316.100l7.900 1.600v21.100l-7.900-2.800z"/>
  <path d="M1883 316.100h14.700v3.400h-1v-2.400h-5.800" />
  <rect x="1888.200" y="326.500" width="1.100" height="3.600" fill="#cfe1f8"/>
  <circle cx="1900.500" cy="319.800" r="1.750"/>
  <path d="M1891.800 327.600c.8-2.900 3.100-4.800 6.400-5.200 1-.1 1.800.4 2.100 1.300l1.200 3.300 2.200 1.700-.8 1-2.800-1.900-.7-1.600-.9 3.600 1.600 3.100.3 4.300h-1.600l-.5-3.800-1.500-2.400-2.200 6.300h-1.700l2.500-7.600.9-4c-1.500.5-2.600 1.500-3.200 3.300z"/>
  <rect x="1901.200" y="330.300" width="3.700" height="3.200" rx=".5"/><path d="M1902.100 330.300v-.7h1.900v.7" fill="none" stroke="#3a86e2" stroke-width=".6"/>
  <!-- check -->
  <circle cx="1893.950" cy="373.300" r="11.100"/>
  <path d="M1888.200 372.400l5.400 5.400 10.200-10.800" fill="none" stroke="#fff" stroke-width="3.500"/>
  <!-- exclaim -->
  <circle cx="1893.900" cy="419.200" r="10.300"/>
  <path d="M1892.800 412.400h2.800l-.4 10.500h-2z" fill="#fff"/><circle cx="1894.200" cy="426" r="1.500" fill="#fff"/>
 </g>
 <!-- storm -->
 <path d="M1887.400 236.300c-2 0-3.500-1.400-3.500-3.200 0-1.700 1.200-2.900 2.800-3.200.3-2.600 2.400-4.500 5-4.500 1.500 0 2.800.6 3.700 1.600.7-1.500 2.200-2.500 3.900-2.500 2.200 0 4 1.600 4.300 3.800 1.100.5 1.800 1.700 1.800 3 0 2-1.500 3.400-3.400 3.400-.6 0-1.100-.1-1.600-.4-.8 1.200-2 2-3.500 2z" fill="#6a6a6a"/>
 <path d="M1893.400 226c1.100-1.400 3-2.200 5.300-1.500 2.200.6 3.400 2 3.900 3.900-1.600-1.400-3.600-1.900-5.400-1.200-1-1.100-2.300-1.500-3.800-1.200z" fill="#525252"/>
 <path d="M1893.600 232.500l-2.300 4.600h1.700l-2.100 3.700h1.500l-3.900 4 1.700-3h-1.500l1.800-3.500h-1.500l2.600-5.800z" fill="#f7c525"/>
 <rect x="1893.900" y="418.700" width="15.100" height="15.300" rx="3" fill="#dc3545"/>
</svg>
<span class="t" style="left:1898.200px;top:426.500px;font-size:11.500px;color:#fff">0</span>

<span class="t bdg" style="left:1885.50px;top:24.30px;font-size:10.6px;letter-spacing:0.890px;">11</span>
</div></body></html>
